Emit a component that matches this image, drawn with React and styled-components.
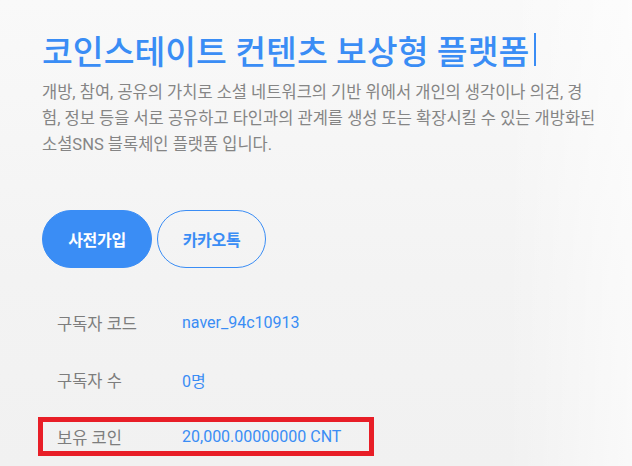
import React from "react";
import styled, { createGlobalStyle } from "styled-components";

const GlobalStyle = createGlobalStyle`
  html, body { margin: 0; padding: 0; }
  body {
    background: #f4f4f4;
    font-family: Roboto, "Noto Sans CJK KR", sans-serif;
  }
`;

const Page = styled.main`
  box-sizing: border-box;
  width: 632px;
  height: 466px;
  overflow: hidden;
  padding: 29px 0 0 42px;
  background:
    linear-gradient(to right, rgba(255,255,255,0) 80%, rgba(255,255,255,0.6) 100%),
    linear-gradient(to bottom, #f9f9f9 0%, #f3f3f3 60%, #f1f1f1 100%);
`;

const Title = styled.h1`
  margin: 0;
  display: flex;
  align-items: center;
  height: 40px;
  font-family: Roboto, "Noto Sans CJK KR", sans-serif;
  font-size: 33.5px;
  font-weight: 500;
  color: #3a8df5;
  white-space: nowrap;
`;

const Cursor = styled.span`
  display: inline-block;
  width: 2px;
  height: 33px;
  margin-left: 5px;
  background: #3a8df5;
`;

const Lead = styled.p`
  margin: 11px 0 0;
  width: 556px;
  font-size: 16.5px;
  line-height: 26px;
  color: #858585;
`;

const Actions = styled.div`
  display: flex;
  gap: 5px;
  margin-top: 52px;
`;

const PillButton = styled.button`
  box-sizing: border-box;
  width: ${(p) => p.$w}px;
  height: 58px;
  border-radius: 29px;
  border: 1px solid #3a8df5;
  background: ${(p) => (p.$filled ? "#3a8df5" : "transparent")};
  color: ${(p) => (p.$filled ? "#ffffff" : "#3a8df5")};
  font-family: Roboto, "Noto Sans CJK KR", sans-serif;
  font-size: 16px;
  font-weight: 700;
  letter-spacing: -0.3px;
  padding: 0;
  cursor: pointer;
`;

const InfoList = styled.dl`
  margin: 35px 0 0 -4px;
  display: flex;
  flex-direction: column;
  gap: 18px;
`;

const InfoRow = styled.div`
  box-sizing: border-box;
  display: flex;
  align-items: center;
  width: 336px;
  height: 39px;
  padding: 0 14px;
  border: 5px solid ${(p) => (p.$highlight ? "#e81e27" : "transparent")};
  font-size: 16px;
`;

const Label = styled.dt`
  width: 125px;
  font-size: 16.5px;
  color: #7d7d7d;
`;

const Value = styled.dd`
  margin: 0;
  color: #3a8df5;
`;

const rows = [
  { label: "구독자 코드", value: "naver_94c10913" },
  { label: "구독자 수", value: "0명" },
  { label: "보유 코인", value: "20,000.00000000 CNT", highlight: true },
];

export default function App() {
  return (
    <>
      <GlobalStyle />
      <Page>
        <Title>
          코인스테이트 컨텐츠 보상형 플랫폼
          <Cursor />
        </Title>
        <Lead>
          개방, 참여, 공유의 가치로 소셜 네트워크의 기반 위에서 개인의 생각이나 의견, 경험, 정보 등을 서로 공유하고 타인과의 관계를 생성 또는 확장시킬 수 있는 개방화된 소셜SNS 블록체인 플랫폼 입니다.
        </Lead>
        <Actions>
          <PillButton $filled $w={110}>사전가입</PillButton>
          <PillButton $w={109}>카카오톡</PillButton>
        </Actions>
        <InfoList>
          {rows.map((r) => (
            <InfoRow key={r.label} $highlight={r.highlight}>
              <Label>{r.label}</Label>
              <Value>{r.value}</Value>
            </InfoRow>
          ))}
        </InfoList>
      </Page>
    </>
  );
}
